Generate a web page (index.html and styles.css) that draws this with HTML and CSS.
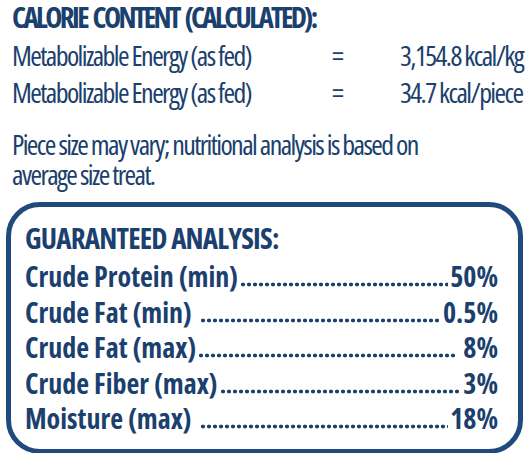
FILE: index.html
```html
<!DOCTYPE html>
<html lang="en">
<head>
  <meta charset="UTF-8">
  <title>Calorie Content and Guaranteed Analysis</title>
  <meta name="viewport" content="width=device-width, initial-scale=1.0">
  <link rel="stylesheet" href="styles.css">
</head>
<body>

  <div class="calories">
    <h2>CALORIE CONTENT (CALCULATED):</h2>
    <div class="energy">
      <span>Metabolizable Energy (as fed)</span>
      <span class="eq">=</span>
      <span>3,154.8 kcal/kg</span>
      <span>Metabolizable Energy (as fed)</span>
      <span class="eq">=</span>
      <span>34.7 kcal/piece</span>
    </div>
    <p class="note">Piece size may vary; nutritional analysis is based on<br>average size treat.</p>
  </div>

  <div class="analysis">
    <h2>GUARANTEED ANALYSIS:</h2>
    <div class="row">
      <span>Crude Protein (min)</span>
      <span class="dots"></span>
      <span>50%</span>
    </div>
    <div class="row">
      <span class="gap-after">Crude Fat (min)</span>
      <span class="dots"></span>
      <span>0.5%</span>
    </div>
    <div class="row">
      <span>Crude Fat (max)</span>
      <span class="dots"></span>
      <span class="gap-before">8%</span>
    </div>
    <div class="row">
      <span>Crude Fiber (max)</span>
      <span class="dots"></span>
      <span>3%</span>
    </div>
    <div class="row">
      <span class="gap-after">Moisture (max)</span>
      <span class="dots"></span>
      <span>18%</span>
    </div>
  </div>

</body>
</html>
```
FILE: styles.css
```css
body {
  margin: 0;
  background-color: #ffffff;
  color: #1b3f6e;
  font-family: "Open Sans", "Liberation Sans", sans-serif;
  font-stretch: 75%;
}

h2 {
  margin: 0;
  font-size: 29px;
  font-weight: 700;
  letter-spacing: -2.6px;
  word-spacing: 3px;
  line-height: 34px;
}

.calories {
  padding: 0 0 0 12px;
  font-size: 28px;
  letter-spacing: -1.6px;
}

.energy {
  display: grid;
  grid-template-columns: 318px 70px auto;
  line-height: 37px;
  margin-top: 3px;
}

.eq {
  padding-left: 2px;
}

.note {
  margin: 18px 0 0;
  line-height: 30px;
}

.analysis {
  margin: 13px 4px 3px 6px;
  border: 5px solid #1e4a7e;
  border-radius: 34px;
  padding: 14px 20px 12px 14px;
}

.analysis h2 {
  margin-bottom: 4px;
  letter-spacing: -0.8px;
  word-spacing: 0;
}

.row {
  display: flex;
  align-items: baseline;
  font-size: 28px;
  font-weight: 700;
  letter-spacing: 0;
  line-height: 35.5px;
}

.dots {
  flex: 1;
  height: 5px;
  margin: 0 2px;
  background-image: radial-gradient(circle, #1b3f6e 1.7px, transparent 2.2px);
  background-size: 6px 5px;
  background-repeat: repeat-x;
}

.gap-after {
  margin-right: 6px;
}

.gap-before {
  margin-left: 6px;
}
```
